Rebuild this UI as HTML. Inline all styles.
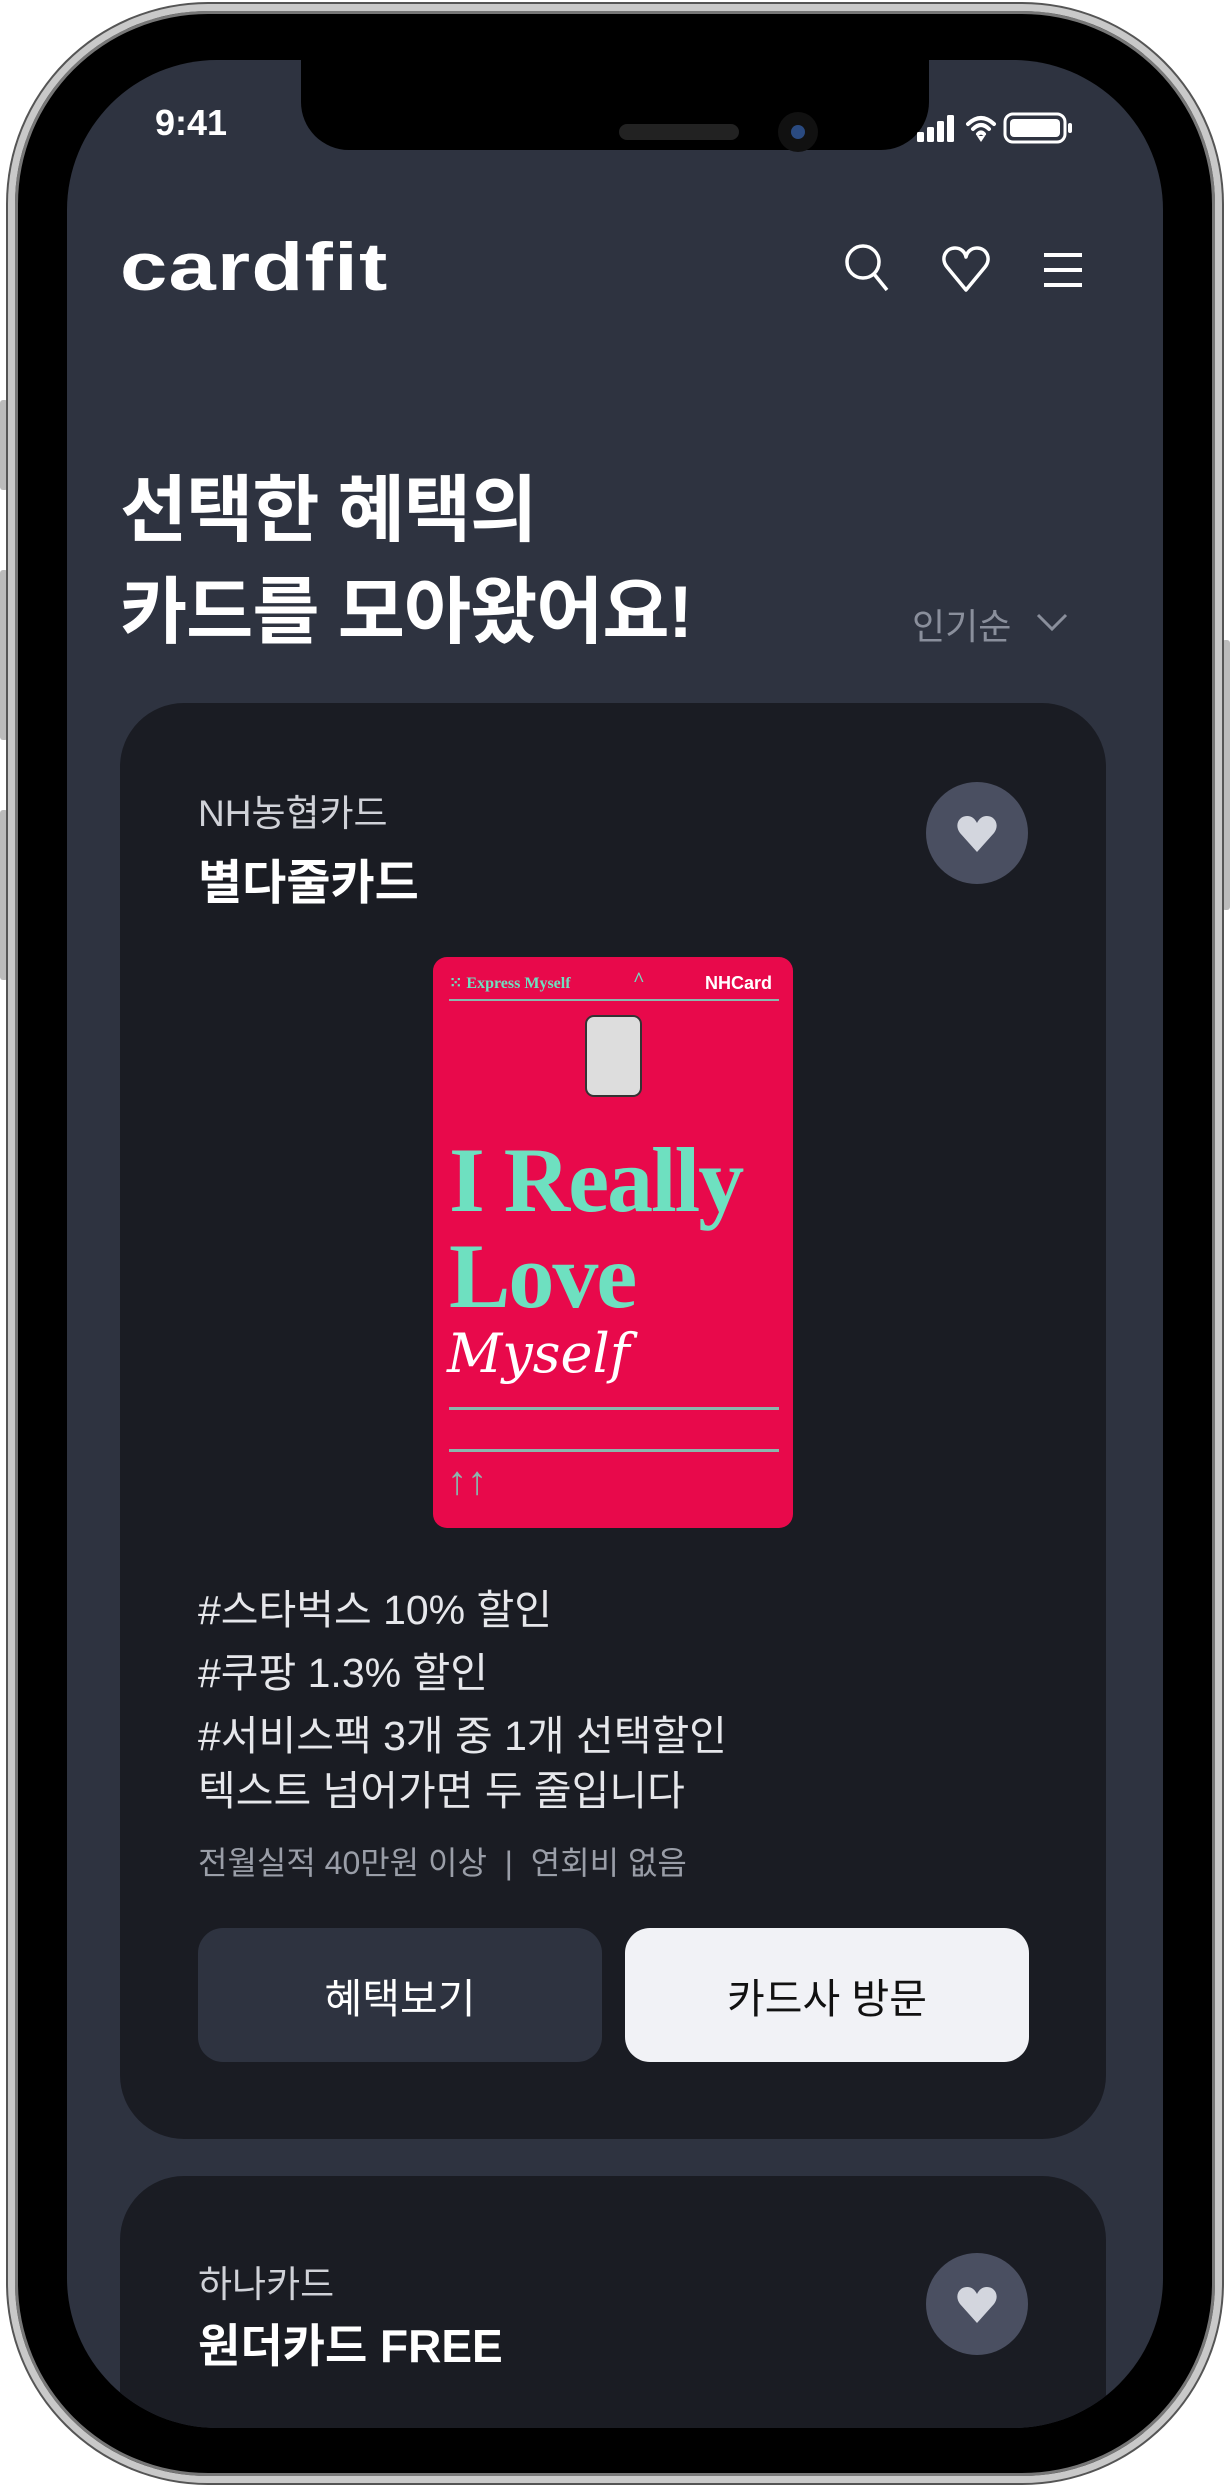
<!DOCTYPE html>
<html><head><meta charset="utf-8"><style>
*{margin:0;padding:0;box-sizing:border-box}
body{width:1230px;height:2487px;background:#fff;position:relative;overflow:hidden;font-family:"Liberation Sans","Noto Sans CJK KR",sans-serif}
.abs{position:absolute}
.frame{left:8px;top:4px;width:1214px;height:2479px;border-radius:200px;background:#000;border:7px solid #c9c9c9;box-shadow:0 0 0 2px #555, inset 0 0 0 3px #777}
.screen{left:67px;top:60px;width:1096px;height:2368px;border-radius:150px;background:#2e3340;overflow:hidden}
.notch{left:234px;top:-10px;width:628px;height:100px;background:#000;border-radius:0 0 48px 48px}
.t{color:#fff;white-space:nowrap}
.card{left:53px;width:986px;background:#1a1c23;border-radius:64px}
.btn{top:1868px;height:134px;width:404px;border-radius:25px;display:flex;align-items:center;justify-content:center;font-size:41px}
.side{background:#bbb;border-radius:3px}
</style></head><body>
<div class="abs side" style="left:0;top:400px;width:8px;height:90px"></div>
<div class="abs side" style="left:0;top:570px;width:8px;height:170px"></div>
<div class="abs side" style="left:0;top:810px;width:8px;height:170px"></div>
<div class="abs side" style="left:1222px;top:640px;width:8px;height:270px"></div>
<div class="abs frame"></div>
<div class="abs screen">
  <div class="abs notch">
    <div class="abs" style="left:318px;top:74px;width:120px;height:16px;border-radius:8px;background:#222"></div>
    <div class="abs" style="left:477px;top:62px;width:40px;height:40px;border-radius:50%;background:#111"><div style="margin:13px;width:14px;height:14px;border-radius:50%;background:#2a4a80"></div></div>
  </div>
  <div class="abs t" style="left:88px;top:42px;font-size:36px;font-weight:bold;">9:41</div>
  <svg class="abs" style="left:850px;top:50px" width="200" height="40" viewBox="0 0 200 40">
    <rect x="0" y="22" width="7" height="10" rx="1.5" fill="#fff"/><rect x="10" y="17" width="7" height="15" rx="1.5" fill="#fff"/><rect x="20" y="11" width="7" height="21" rx="1.5" fill="#fff"/><rect x="30" y="5" width="7" height="27" rx="1.5" fill="#fff"/>
    <path d="M51 14 Q64 2 77 14 M56 19 Q64 11 72 19 M61 24 Q64 21 67 24" stroke="#fff" stroke-width="4" fill="none" stroke-linecap="round"/><path d="M60 26 L64 32 L68 26Z" fill="#fff"/>
    <rect x="88" y="4" width="60" height="28" rx="8" fill="none" stroke="#fff" stroke-width="3"/><rect x="93" y="9" width="50" height="18" rx="4" fill="#fff"/><rect x="151" y="13" width="4" height="10" rx="2" fill="#fff"/>
  </svg>
  <div class="abs t" style="left:53px;top:168px;font-size:68px;font-weight:900;letter-spacing:1px;transform:scaleX(1.25);transform-origin:left top">cardfit</div>
  <svg class="abs" style="left:775px;top:180px" width="330" height="60" viewBox="0 0 330 60">
    <circle cx="21" cy="22" r="16" stroke="#fff" stroke-width="3.5" fill="none"/><path d="M32 34 L45 50" stroke="#fff" stroke-width="3.5"/>
    <path d="M124 50 L105 27 C98 18 104 8 113 8 C119 8 123 12 124 17 C125 12 129 8 135 8 C144 8 150 18 143 27 Z" stroke="#fff" stroke-width="3.5" fill="none" stroke-linejoin="round"/>
    <path d="M202 15 H240 M202 30 H240 M202 45 H240" stroke="#fff" stroke-width="4"/>
  </svg>
  <div class="abs t" style="left:53px;top:400px;font-size:73px;font-weight:bold;line-height:102px;letter-spacing:-1px">선택한 혜택의<br>카드를 모아왔어요!</div>
  <div class="abs" style="left:845px;top:538px;font-size:36px;color:#8a8f9c">인기순</div>
  <svg class="abs" style="left:968px;top:550px" width="34" height="24"><path d="M3 5 L17 19 L31 5" stroke="#8a8f9c" stroke-width="3" fill="none"/></svg>

  <div class="abs card" style="top:643px;height:1436px">
    <div class="abs" style="left:78px;top:80px;font-size:37px;color:#d0d2d8">NH농협카드</div>
    <div class="abs t" style="left:78px;top:140px;font-size:48px;font-weight:bold">별다줄카드</div>
    <div class="abs" style="left:806px;top:79px;width:102px;height:102px;border-radius:50%;background:#4a4f61"></div>
    <svg class="abs" style="left:836px;top:112px" width="42" height="38" viewBox="0 0 42 38"><path d="M21 37 L4 18 C-2 10 3 1 11 1 C16 1 19 4 21 8 C23 4 26 1 31 1 C39 1 44 10 38 18 Z" fill="#d3d6de"/></svg>
    <div class="abs" style="left:313px;top:254px;width:360px;height:571px;background:#e8094b;border-radius:14px;overflow:hidden;font-family:'Liberation Serif',serif">
      <div class="abs" style="left:16px;top:16px;font-size:16px;font-weight:bold;color:#6ee0c0">⁙ Express Myself</div>
      <div class="abs" style="left:200px;top:12px;font-size:20px;font-weight:bold;color:#6ee0c0">^</div>
      <div class="abs" style="left:272px;top:16px;font-size:18px;font-weight:bold;color:#fff;font-family:'Liberation Sans',sans-serif">NHCard</div>
      <div class="abs" style="left:16px;top:42px;width:330px;height:2px;background:#8ab7ad"></div>
      <div class="abs" style="left:152px;top:58px;width:57px;height:82px;border-radius:9px;background:#ddd;border:2px solid #333"></div>
      <div class="abs" style="left:16px;top:175px;font-size:92px;font-weight:bold;color:#6ee0c0;line-height:96px;letter-spacing:-2px">I Really<br>Love</div>
      <div class="abs" style="left:14px;top:365px;font-size:54px;font-style:italic;color:#fff;font-family:'DejaVu Serif',serif">Myself</div>
      <div class="abs" style="left:16px;top:450px;width:330px;height:3px;background:#8ab7ad"></div>
      <div class="abs" style="left:16px;top:492px;width:330px;height:3px;background:#8ab7ad"></div>
      <div class="abs" style="left:14px;top:500px;font-size:40px;color:#8ab7ad">↑↑</div>
    </div>
    <div class="abs" style="left:78px;top:876px;font-size:41px;color:#e6e7eb;line-height:63px">#스타벅스 10% 할인<br>#쿠팡 1.3% 할인<br>#서비스팩 3개 중 1개 선택할인</div>
    <div class="abs" style="left:78px;top:1054px;font-size:41px;color:#e6e7eb">텍스트 넘어가면 두 줄입니다</div>
    <div class="abs" style="left:78px;top:1135px;font-size:32px;color:#9a9ea8;white-space:pre">전월실적 40만원 이상  |  연회비 없음</div>
  </div>
  <div class="abs btn" style="left:131px;top:1868px;background:#2e3340;color:#fff">혜택보기</div>
  <div class="abs btn" style="left:558px;top:1868px;background:#f1f2f6;color:#111">카드사 방문</div>

  <div class="abs card" style="top:2116px;height:400px">
    <div class="abs" style="left:78px;top:78px;font-size:37px;color:#d0d2d8">하나카드</div>
    <div class="abs t" style="left:78px;top:134px;font-size:46px;font-weight:bold">원더카드 FREE</div>
    <div class="abs" style="left:806px;top:77px;width:102px;height:102px;border-radius:50%;background:#4a4f61"></div>
    <svg class="abs" style="left:836px;top:110px" width="42" height="38" viewBox="0 0 42 38"><path d="M21 37 L4 18 C-2 10 3 1 11 1 C16 1 19 4 21 8 C23 4 26 1 31 1 C39 1 44 10 38 18 Z" fill="#d3d6de"/></svg>
  </div>
</div>
</body></html>
